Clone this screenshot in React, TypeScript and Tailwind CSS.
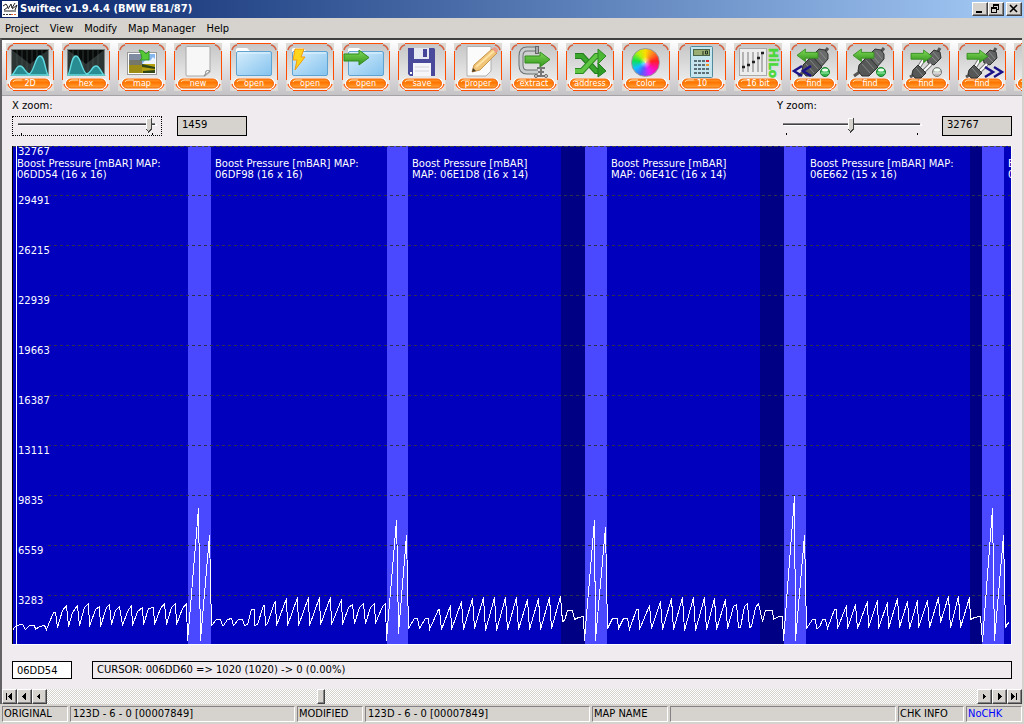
import React from "react";

const ui = "font-['DejaVu_Sans_Condensed','DejaVu_Sans',sans-serif] text-[11px] leading-[14px]";
const wide = "font-['DejaVu_Sans',Verdana,sans-serif] text-[10px] leading-[11px]";
const raised =
  "border border-t-white border-l-white border-r-[#424142] border-b-[#424142] shadow-[inset_-1px_-1px_0_#848284] bg-[#d6d3ce]";
const sunken =
  "border border-t-[#848284] border-l-[#848284] border-r-white border-b-white";

const menus = ["Project", "View", "Modify", "Map Manager", "Help"];

const tools = [
  { icon: "wave", label: "2D" },
  { icon: "waveFlip", label: "hex" },
  { icon: "map", label: "map" },
  { icon: "page", label: "new" },
  { icon: "folder", label: "open" },
  { icon: "folderBolt", label: "open" },
  { icon: "folderArrow", label: "open" },
  { icon: "disk", label: "save" },
  { icon: "pencil", label: "proper" },
  { icon: "clamp", label: "extract" },
  { icon: "shuffle", label: "address" },
  { icon: "color", label: "color" },
  { icon: "calc", label: "10" },
  { icon: "hilo", label: "16 bit" },
  { icon: "plugPrev", label: "find" },
  { icon: "plugLeft", label: "find" },
  { icon: "plugRight", label: "find" },
  { icon: "plugNext", label: "find" },
  { icon: "none", label: "" },
];

const scale = [32767, 29491, 26215, 22939, 19663, 16387, 13111, 9835, 6559, 3283];

const lightBands = [
  [188, 23],
  [387, 21],
  [585, 22],
  [784, 22],
  [982, 22],
];
const darkBands = [
  [561, 24],
  [760, 24],
  [970, 12],
];

const mapLabels = [
  { x: 17, a: "Boost Pressure [mBAR] MAP:", b: "06DD54 (16 x 16)" },
  { x: 215, a: "Boost Pressure [mBAR] MAP:", b: "06DF98 (16 x 16)" },
  { x: 412, a: "Boost Pressure [mBAR]", b: "MAP: 06E1D8 (16 x 14)" },
  { x: 611, a: "Boost Pressure [mBAR]", b: "MAP: 06E41C (16 x 14)" },
  { x: 810, a: "Boost Pressure [mBAR] MAP:", b: "06E662 (15 x 16)" },
  { x: 1008, a: "B", b: "0" },
];

const trace = `
12,630 14,627 16,625 22,624 25,629 29,625 34,625 35,629 39,626 44,625 46,629 53,612 55,612 57,627
62,610 66,605 68,626 72,612 77,605 79,625 84,607 88,603 89,626 95,609 99,606 100,626 106,607 109,604
111,624 115,610 119,606 122,625 127,611 131,605 132,625 137,611 142,607 143,624 148,608 153,607
154,624 160,608 164,603 166,624 171,607 175,603 176,624 182,608 186,603 187,640 188,630 198,508
199,575 200,640 209,535 210,580 211,625 216,619 220,619 222,625 223,625 227,619 231,618 233,625
238,619 242,619 244,625 247,624 251,609 254,609 254,625 257,624 263,605 264,605 265,625 267,623
274,602 275,601 276,625 286,598 287,625 297,597 298,625 308,597 309,625 319,597 320,624 330,597
331,624 341,599 342,624 348,607 352,604 354,623 359,607 363,603 365,623 370,607 374,603 375,623
382,606 385,603 386,640 387,627 396,520 397,567 398,633 406,535 407,582 408,628 414,618 417,618
419,628 425,618 428,618 429,629 438,609 439,609 441,629 450,605 451,629 461,601 463,629 472,598
474,628 483,597 485,630 494,597 496,630 505,597 507,629 516,597 518,629 527,599 529,629 538,598
540,629 549,597 551,628 560,596 562,621 564,620 567,610 572,610 574,619 578,617 583,616 584,640
585,627 594,520 595,640 596,628 605,527 607,628 612,618 617,618 618,628 623,618 627,618 629,629
636,609 638,609 639,629 649,605 651,628 660,601 662,629 671,598 673,629 682,597 684,630 693,597
695,630 704,597 706,629 714,598 716,629 725,599 727,628 733,606 736,604 738,627 740,627 744,606
747,603 749,627 751,626 755,607 758,603 762,621 765,610 772,610 773,619 778,616 782,616 783,640
794,496 795,640 804,535 806,628 812,619 815,619 816,628 819,627 822,619 825,619 827,628 834,609
836,609 837,628 846,605 847,628 855,604 857,628 867,601 868,627 877,600 878,628 887,602 888,628
897,598 899,627 907,601 909,628 917,600 918,627 927,600 929,627 938,597 940,622 948,596 950,627
958,596 960,627 969,597 970,619 974,617 980,616 982,641 992,508 994,640 1003,535 1005,627 1007,623
1009,622`;

function Wave({ flip }: { flip?: boolean }) {
  return (
    <g>
      <rect x="5" y="6" width="38" height="27" fill="#7b8280" />
      <rect x="6" y="7" width="36" height="25" fill="#2d3434" />
      <path d="M6 7h36L24 21z" fill="#000" opacity=".8" />
      <path d="M11 7v25M16 7v25M21 7v25M26 7v25M31 7v25M36 7v25" stroke="#50605f" opacity=".5" />
      <path
        transform={flip ? "translate(48 0) scale(-1 1)" : undefined}
        d="M6 32C9 30 10 23 14 23S19 30 23 31C28 30 29 13 34 13S39 28 42 32z"
        fill="#2a8c93"
        stroke="#62dbe0"
        strokeWidth="1.4"
      />
    </g>
  );
}

function Folder() {
  return (
    <g>
      <path d="M6 10V6.500q0-1.500 2-1.500h9l3 3h19q2 0 2 2v3H6z" fill="#fff" />
      <rect x="6.500" y="8.500" width="35" height="24" rx="1.500" fill="url(#folderFill)" stroke="#5ea3d2" />
      <path d="M8 10h32" stroke="#e7f6ff" />
    </g>
  );
}

function Arrow({ x, y, left, size = 1 }: { x: number; y: number; left?: boolean; size?: number }) {
  return (
    <path
      transform={`translate(${left ? x + 25 * size : x} ${y}) scale(${left ? -size : size} ${size})`}
      d="M0 4h15V0l10 7.500L15 15v-4H0z"
      fill="url(#green)"
      stroke="#318a1d"
    />
  );
}

// two halves of a connector, drawn along one diagonal
function Plug({ apart }: { apart?: boolean }) {
  if (apart) {
    return (
      <g>
        <path d="M35 10l3-5M13 31l-5 3" stroke="#555" strokeWidth="3" />
        <path d="M25 14l7-7 6 2 1 6-7 7-6-2z" fill="#626464" stroke="#303232" />
        <path d="M28 12l7 7M31 9l6 7" stroke="#8b8d8d" />
        <path d="M17 24l5-8M22 28l7-7" stroke="#777" strokeWidth="4" />
        <path d="M17 24l5-8M22 28l7-7" stroke="#fff" strokeWidth="2" />
        <path d="M11 27l5-5 8 8-5 5-6 0-3-4z" fill="#565858" stroke="#2d2f2f" />
        <path d="M14 25l7 8" stroke="#858787" />
      </g>
    );
  }
  return (
    <g>
      <path d="M34 10l4-5M15 28l-7 5" stroke="#555" strokeWidth="3" />
      <path d="M22 13l7-7 6 1 3 4v5l-7 8z" fill="#6a6c6c" stroke="#303232" />
      <path d="M26 12l7 8M30 9l6 7" stroke="#8b8d8d" />
      <path d="M13 22l9-9 10 11-9 9h-7l-4-5z" fill="#565858" stroke="#2d2f2f" />
      <path d="M16 21l8 9M20 17l8 9" stroke="#858787" />
    </g>
  );
}

function Ball({ gray }: { gray?: boolean }) {
  return (
    <g>
      <circle cx="35" cy="29" r="4.500" fill={gray ? "#b9b9b9" : "#35b54e"} stroke={gray ? "#777" : "#16802a"} />
      <ellipse cx="35" cy="27" rx="3" ry="1.500" fill="#f0fff0" />
      <path d="M31 30h8" stroke={gray ? "#eee" : "#a7efb1"} />
    </g>
  );
}

function ToolIcon({ name }: { name: string }) {
  switch (name) {
    case "wave":
      return <Wave />;
    case "waveFlip":
      return <Wave flip />;
    case "map":
      return (
        <g>
          <rect x="9.500" y="9.500" width="29" height="22" fill="#fff" stroke="#999" />
          <rect x="11" y="11" width="13" height="19" fill="#7f8ba0" />
          <path d="M11 17h13v5H11z" fill="#74776a" />
          <path d="M11 22h13v8H11z" fill="#9d8d16" />
          <rect x="24" y="11" width="13" height="10" fill="#86b6ee" />
          <path d="M25 20l4-5 3 3 3-4 2 2v6H24z" fill="#edf5fb" />
          <path d="M24 21h13v9H24z" fill="#b5a111" />
          <path d="M24 21l13 3v2l-13-2zM25 28l12-1v3H25z" fill="#314616" />
          <path d="M21 7q5 0 7 4l3-3v9h-9l2-2q-1-5-3-8z" fill="#55c936" stroke="#35932a" />
        </g>
      );
    case "page":
      return (
        <g>
          <path d="M13 3.500h22q1 0 1 1V29l-5 4H13q-1 0-1-1V4.500q0-1 1-1z" fill="#f7f7f7" stroke="#a8a8a8" />
          <path d="M36 28q-3-1-4 0 0 3-2 5z" fill="#fff" stroke="#888" />
        </g>
      );
    case "folder":
      return <Folder />;
    case "folderBolt":
      return (
        <g>
          <Folder />
          <path d="M9 6h9l-3 8h4L9 27l2-10H7z" fill="#ffd51c" stroke="#f39c12" />
        </g>
      );
    case "folderArrow":
      return (
        <g>
          <Folder />
          <Arrow x={2} y={7} />
        </g>
      );
    case "disk":
      return (
        <g>
          <path d="M10 5h26l1 1v27H12l-2-2z" fill="#4a4a9c" />
          <rect x="16" y="5" width="15" height="11" fill="#e6e8f2" />
          <rect x="25" y="6" width="4" height="8" fill="#45469a" />
          <rect x="15" y="20" width="18" height="13" fill="#f6f6fa" />
          <path d="M17 24h14M17 28h14" stroke="#d4d4dd" />
          <rect x="12" y="29" width="2" height="2" fill="#fff" />
        </g>
      );
    case "pencil":
      return (
        <g>
          <path d="M13 3.500h24V28l-5 5H13z" fill="#fbfbfb" stroke="#b0b0b0" />
          <path d="M18 29l2-7L38 6l5 4-17 17z" fill="#f0c57a" stroke="#c9964c" />
          <path d="M38 6l2-2q4 1 4 4l-2 2z" fill="#ed9a86" />
          <path d="M22 24L40 8" stroke="#ffe3a2" strokeWidth="2" />
          <path d="M18 29l1-4 3 3z" fill="#4b3a25" />
        </g>
      );
    case "clamp":
      return (
        <g fill="none">
          <path d="M26 6H17q-6 0-6 7v9q0 7 6 7h11" stroke="#6b7072" strokeWidth="5" />
          <path d="M26 6H17q-6 0-6 7v9q0 7 6 7h11" stroke="#c9cdce" strokeWidth="3" />
          <rect x="25.500" y="3.500" width="3" height="7" fill="#a4a8aa" stroke="#666" />
          <path d="M31 24v8M27 25h8M28 29h6M26 33h11" stroke="#777" strokeWidth="2" />
          <circle cx="26" cy="33" r="1.500" fill="#ddd" stroke="#666" />
          <circle cx="36" cy="33" r="1.500" fill="#ddd" stroke="#666" />
          <Arrow x={15} y={9} />
        </g>
      );
    case "shuffle":
      return (
        <g>
          <path d="M9 13h7l14 15h3" fill="none" stroke="#217d1d" strokeWidth="6" />
          <path d="M9 13h7l14 15h3" fill="none" stroke="#3aa62c" strokeWidth="4" />
          <path d="M32 20l8 8-8 6z" fill="#2f9c25" stroke="#217d1d" />
          <path d="M9 28h7l14-15h3" fill="none" stroke="#2b8922" strokeWidth="6" />
          <path d="M9 28h7l14-15h3" fill="none" stroke="#62c645" strokeWidth="4" />
          <path d="M32 6l8 7-8 8z" fill="#4cb936" stroke="#2b8922" />
        </g>
      );
    case "color":
      return (
        <foreignObject x="9" y="5" width="30" height="30">
          <div className="h-[29px] w-[29px] rounded-full border border-[#999] bg-[radial-gradient(circle,#ffffffa0_0%,transparent_30%),conic-gradient(#ffdc00,#ff8020,#ff2020,#ff10a0,#e020ff,#5060ff,#10c0ff,#10e050,#b0f010,#ffdc00)]" />
        </foreignObject>
      );
    case "calc":
      return (
        <g>
          <rect x="12.500" y="3.500" width="22" height="31" rx="1" fill="#c6e6ef" stroke="#528c9c" />
          <rect x="15.500" y="6.500" width="16" height="6" fill="#9aad72" stroke="#4b6548" />
          <path d="M25 8v4M27.500 8h2v3h-2z" stroke="#203020" fill="none" />
          <path d="M16 18h12M16 22h12M16 26h12M16 30h12" stroke="#5d7077" strokeWidth="2" strokeDasharray="3 1" />
          <path d="M28 18h3" stroke="#e02c2c" strokeWidth="2" />
          <path d="M28 22h3" stroke="#f09a20" strokeWidth="2" />
          <path d="M28 26h3M28 30h3" stroke="#5d7077" strokeWidth="2" />
        </g>
      );
    case "hilo":
      return (
        <g>
          <rect x="5.500" y="5.500" width="27" height="27" fill="#ededed" stroke="#aaa" />
          <path d="M9 9v20M14 9v20M19 9v20M24 9v20M28 9v20" stroke="#a0a0a0" strokeWidth="1.500" />
          <path d="M8 24h3M13 22h3M18 19h3M23 15h3M27 10h3" stroke="#202020" strokeWidth="2.500" />
          <text
            transform="translate(35 5) rotate(90)"
            fill="#4bd83b"
            stroke="#4bd83b"
            strokeWidth=".5"
            className="font-['DejaVu_Sans',sans-serif] text-[12px] font-bold"
          >
            HiLo
          </text>
        </g>
      );
    case "plugPrev":
      return (
        <g>
          <Plug />
          <Arrow x={7} y={6} left size={0.84} />
          <path d="M12 23l-8 5 8 5M21 23l-8 5 8 5" fill="none" stroke="#1b1287" strokeWidth="2.500" />
          <Ball />
        </g>
      );
    case "plugLeft":
      return (
        <g>
          <Plug />
          <Arrow x={7} y={6} left size={0.84} />
          <Ball />
        </g>
      );
    case "plugRight":
      return (
        <g>
          <Plug apart />
          <Arrow x={9} y={7} size={0.84} />
          <Ball gray />
        </g>
      );
    case "plugNext":
      return (
        <g>
          <Plug apart />
          <Arrow x={9} y={7} size={0.84} />
          <path d="M27 24l8 5-8 5M36 24l8 5-8 5" fill="none" stroke="#1b1287" strokeWidth="2.500" />
        </g>
      );
    default:
      return null;
  }
}

function ToolButton({ icon, label }: { icon: string; label: string }) {
  return (
    <button className="relative h-12 w-12 shrink-0" aria-label={label || "more"}>
      <svg viewBox="0 0 48 48" className="block h-12 w-12">
        <rect width="48" height="48" fill="#dedbd6" />
        <rect x="1" y="1" width="46" height="46" rx="6" fill="url(#tile)" />
        <path d="M7 .500h34M47.500 8v29M7 47.500h34M.500 8v29" stroke="#ff4d00" fill="none" />
        <path d="M2 7q1-4 5-5M41 2q4 1 5 5" stroke="#d9603c" strokeWidth="1.500" fill="none" />
        <path d="M46 41q-1 4-5 5M7 46q-4-1-5-5" stroke="#ff6a20" strokeWidth="1.500" fill="none" />
        <rect x="3" y="35" width="42" height="11" rx="5.500" fill="#fff" />
        <rect x="4.500" y="36" width="39" height="9" rx="4.500" fill="url(#pill)" stroke="#f06000" />
        <path d="M7 39q1-2 3-2h6" stroke="#ffe0b0" fill="none" />
        <ToolIcon name={icon} />
      </svg>
      <span className="absolute inset-x-0 top-[36px] text-center font-['DejaVu_Sans',sans-serif] text-[8px] leading-[9px] text-white">
        {label}
      </span>
    </button>
  );
}

function Slider({ id, pos, focus }: { id: string; pos: number; focus?: boolean }) {
  return (
    <div
      className={
        focus
          ? "relative h-5 w-[150px] border border-dotted border-black"
          : "relative h-5 w-[150px] border border-transparent"
      }
    >
      <input id={id} type="range" defaultValue={pos} max={148} className="absolute inset-0 w-full opacity-0" />
      <svg viewBox="0 0 148 18" className="pointer-events-none block h-[18px] w-[148px]" shapeRendering="crispEdges">
        <path d="M5 6.500h137" stroke="#848284" />
        <path d="M5 7.500h137" stroke="#424142" />
        <path d="M6 8.500h137v-2" stroke="#fff" fill="none" />
        <path d="M8.500 16v2M139.500 16v2" stroke="#000" />
        <g transform={`translate(${pos} 1)`}>
          <path d="M0 0h6v11l-3 3-3-3z" fill="#d6d3ce" />
          <path d="M.500 11V.500H5" stroke="#fff" fill="none" />
          <path d="M5.500 0v11l-3 3-2-3" stroke="#424142" fill="none" />
        </g>
      </svg>
    </div>
  );
}

function ScrollButton({ d, label }: { d: string; label: string }) {
  return (
    <button className={`h-[15px] w-[15px] ${raised}`} aria-label={label}>
      <svg viewBox="0 0 13 13" className="block h-[13px] w-[13px]" shapeRendering="crispEdges">
        <path d={d} />
      </svg>
    </button>
  );
}

function Chart() {
  return (
    <div className="relative h-[499px] overflow-hidden">
      <svg
        viewBox="12 146 1000 499"
        preserveAspectRatio="none"
        className="block h-full w-full"
        shapeRendering="crispEdges"
      >
        <rect x="12" y="146" width="1000" height="499" fill="#0000bd" />
        {lightBands.map(([x, w]) => (
          <rect key={x} x={x} y="146" width={w} height="499" fill="#4a49ff" />
        ))}
        {darkBands.map(([x, w]) => (
          <rect key={x} x={x} y="146" width={w} height="499" fill="#000084" />
        ))}
        <path d="M12 146.500h1000" stroke="#424142" strokeDasharray="4 2" />
        {scale.slice(1).map((v, i) => (
          <path
            key={v}
            d={`M48 ${195.5 + i * 50}H1012`}
            stroke="#31304a"
            strokeDasharray="3 3"
          />
        ))}
        <path d="M12.500 146v498" stroke="#000" />
        <path d="M16.500 146v498" stroke="#fff" />
        <polyline points={trace} transform="translate(.5 .5)" fill="none" stroke="#fff" />
        <path d="M12 644.500h999.500V146" fill="none" stroke="#fff" />
      </svg>
      <div className={`absolute left-[6px] top-0 flex flex-col text-white ${wide}`}>
        {scale.map((v) => (
          <span key={v} className="h-[50px] first:h-[49px]">
            {v}
          </span>
        ))}
      </div>
      {mapLabels.map((m) => (
        <div
          key={m.x}
          className={`absolute top-3 whitespace-nowrap text-white ${wide}`}
          style={{ left: `${(m.x - 12) / 10}%` }}
        >
          {m.a}
          <br />
          {m.b}
        </div>
      ))}
    </div>
  );
}

export default function App() {
  return (
    <div className="flex min-h-screen flex-col overflow-hidden bg-[#d6d3ce] text-black">
      <header
        className={`flex h-[18px] items-center bg-linear-to-r from-[#0a246a] to-[#a5cbf7] pl-[2px] pr-[2px] ${ui}`}
      >
        <svg viewBox="0 0 16 16" className="h-4 w-4">
          <rect width="16" height="16" fill="#fff" />
          <path d="M1 5l3-2 2 3-4 3M6 8l3-5 1 4 3-5M10 8l5-4-2 5M2 10h12" stroke="#222" fill="none" />
          <path d="M1 13.500h8" stroke="#333" strokeDasharray="2 1" />
          <path d="M9 13.500h6" stroke="#e06030" strokeDasharray="2 1" />
        </svg>
        <h1 className="ml-[2px] flex-1 whitespace-nowrap font-bold text-white">
          Swiftec v1.9.4.4 (BMW E81/87)
        </h1>
        <button className={`h-[14px] w-4 ${raised}`} aria-label="Minimize">
          <svg viewBox="0 0 14 12" className="block h-3 w-[14px]">
            <path d="M3 8h6v2H3z" />
          </svg>
        </button>
        <button className={`h-[14px] w-4 ${raised}`} aria-label="Restore">
          <svg viewBox="0 0 14 12" className="block h-3 w-[14px]" shapeRendering="crispEdges">
            <path d="M4 1h6v6H8V6h1V3H5v1H4z" />
            <path d="M2 4h6v6H2zM3 6v3h4V6z" fillRule="evenodd" />
          </svg>
        </button>
        <button className={`ml-[2px] h-[14px] w-4 ${raised}`} aria-label="Close">
          <svg viewBox="0 0 14 12" className="block h-3 w-[14px]">
            <path d="M3 2l7 7M10 2l-7 7" stroke="#000" strokeWidth="1.600" />
          </svg>
        </button>
      </header>

      <nav className={`flex h-5 items-end gap-[11px] pb-[2px] pl-[5px] ${ui}`}>
        {menus.map((m) => (
          <button key={m}>{m}</button>
        ))}
      </nav>

      <main className="mr-[2px] flex flex-1 flex-col border-l-2 border-t-2 border-l-[#636163] border-t-[#424142] bg-[#efebef]">
        <svg className="absolute h-0 w-0">
          <defs>
            <linearGradient id="tile" x2="0" y2="1">
              <stop offset="0" stopColor="#c6c6c6" />
              <stop offset="1" stopColor="#f4f4f4" />
            </linearGradient>
            <linearGradient id="pill" x2="0" y2="1">
              <stop offset="0" stopColor="#ff9a30" />
              <stop offset=".4" stopColor="#ff7400" />
              <stop offset="1" stopColor="#ffa53c" />
            </linearGradient>
            <linearGradient id="green" x2="0" y2="1">
              <stop offset="0" stopColor="#7ed957" />
              <stop offset="1" stopColor="#35941e" />
            </linearGradient>
            <linearGradient id="folderFill" x2="1" y2="1">
              <stop offset="0" stopColor="#d6edfb" />
              <stop offset="1" stopColor="#84c3ef" />
            </linearGradient>
          </defs>
        </svg>

        <div className="flex h-14 gap-2 overflow-hidden border-b border-[#a5a2a5] bg-linear-to-b from-white to-[#c6c3c6] pl-1 pt-[3px]">
          {tools.map((t, i) => (
            <ToolButton key={i} icon={t.icon} label={t.label} />
          ))}
        </div>

        <div className="flex flex-1 flex-col pl-[10px] pr-[10px]">
          <div className={`flex h-[50px] justify-between pt-1 ${wide}`}>
            <div>
              <label htmlFor="xzoom" className="block h-4">
                X zoom:
              </label>
              <div className="flex gap-[15px]">
                <Slider id="xzoom" pos={133} focus />
                <input
                  aria-label="X zoom value"
                  readOnly
                  defaultValue="1459"
                  className="h-5 w-[70px] border border-black bg-[#d6d3ce] px-1 pb-1"
                />
              </div>
            </div>
            <div>
              <label htmlFor="yzoom" className="block h-4">
                Y zoom:
              </label>
              <div className="flex gap-[15px]">
                <Slider id="yzoom" pos={70} />
                <input
                  aria-label="Y zoom value"
                  readOnly
                  defaultValue="32767"
                  className="h-5 w-[70px] border border-black bg-[#d6d3ce] px-1 pb-1"
                />
              </div>
            </div>
          </div>

          <Chart />

          <div className="mt-4 flex gap-5">
            <input
              aria-label="Address"
              defaultValue="06DD54"
              className={`h-[18px] w-[60px] border border-black bg-white px-1 ${ui}`}
            />
            <output className={`block h-[18px] flex-1 border border-black px-1 pt-[2px] ${wide}`}>
              CURSOR: 006DD60 =&gt; 1020 (1020) -&gt; 0 (0.00%)
            </output>
          </div>
        </div>

        <div className="flex h-[15px] bg-[repeating-conic-gradient(#fff_0_25%,#d6d3ce_0_50%)] bg-[length:2px_2px]">
          <ScrollButton label="First" d="M3 3h1v7H3zM9 3v7H8V9H7V8H6V7H5V6h1V5h1V4h1V3z" />
          <ScrollButton label="Page back" d="M8 3v7H7V9H6V8H5V7H4V6h1V5h1V4h1V3z" />
          <ScrollButton label="Back" d="M7 4v5H6V8H5V7H4V6h1V5h1V4z" />
          <div className="flex-[270]" />
          <button className={`h-[15px] w-[8px] ${raised}`} aria-label="Position" />
          <div className="flex-[652]" />
          <ScrollButton label="Forward" d="M5 4v5h1V8h1V7h1V6H7V5H6V4z" />
          <ScrollButton label="Page forward" d="M5 3v7h1V9h1V8h1V7h1V6H8V5H7V4H6V3z" />
          <ScrollButton label="Last" d="M3 3v7h1V9h1V8h1V7h1V6H6V5H5V4H4V3zM8 3h1v7H8z" />
        </div>
      </main>

      <footer className={`flex h-5 gap-[2px] pb-[2px] pl-[2px] pr-[2px] pt-[2px] ${ui}`}>
        <span className={`w-[66px] shrink-0 px-px ${sunken}`}>ORIGINAL</span>
        <span className={`w-[225px] px-[2px] ${sunken}`}>123D - 6 - 0 [00007849]</span>
        <span className={`w-[66px] shrink-0 px-px ${sunken}`}>MODIFIED</span>
        <span className={`w-[225px] px-[2px] ${sunken}`}>123D - 6 - 0 [00007849]</span>
        <span className={`w-[76px] shrink-0 px-px ${sunken}`}>MAP NAME</span>
        <span className={`flex-1 ${sunken}`} />
        <span className={`w-[66px] shrink-0 px-px ${sunken}`}>CHK INFO</span>
        <span className={`w-[56px] shrink-0 px-px text-[#0000ff] ${sunken}`}>NoCHK</span>
      </footer>
    </div>
  );
}
